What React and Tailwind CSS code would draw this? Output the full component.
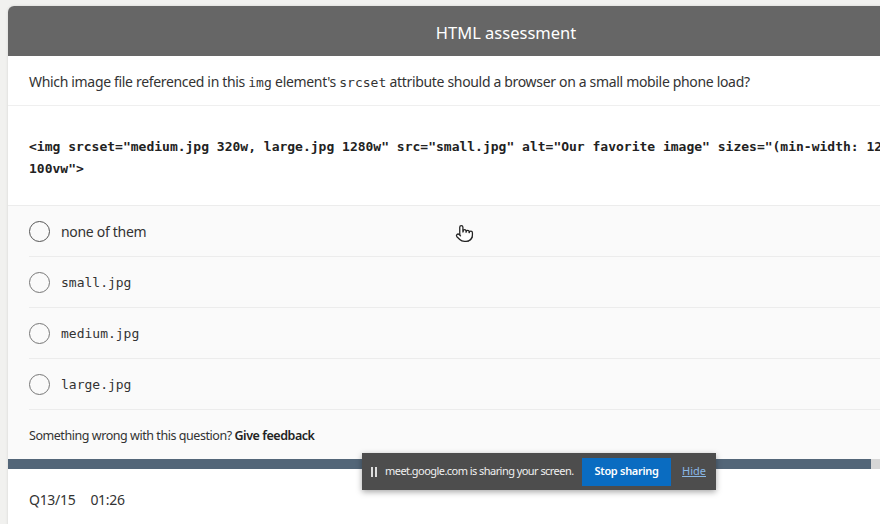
import { Pointer } from 'lucide-react';

const sans = { fontFamily: '"Noto Sans", "Open Sans", sans-serif' };
const mono = { fontFamily: '"DejaVu Sans Mono", "Liberation Mono", monospace' };

const options = [
  { label: 'none of them', code: false, hovered: true },
  { label: 'small.jpg', code: true },
  { label: 'medium.jpg', code: true },
  { label: 'large.jpg', code: true },
];

const Option = ({ label, code, hovered }) => (
  <div className="flex items-center gap-[11px] h-[51px] border-b border-[#ececec]">
    <span
      className={`w-[21px] h-[21px] rounded-full border-[1.5px] ${hovered ? 'border-[#555]' : 'border-[#777]'}`}
    />
    <span
      className={code ? 'text-[13px] text-[#333] pt-[2px]' : 'text-[14px] text-[#333] tracking-[-0.3px]'}
      style={code ? mono : sans}
    >
      {label}
    </span>
  </div>
);

const App = () => {
  return (
    <div className="relative w-[880px] h-[524px] overflow-hidden bg-[#f1f1ef]" style={sans}>
      <div className="ml-[8px] mt-[6px] w-[996px] bg-white rounded-t-[6px] overflow-hidden shadow-[0_0_3px_rgba(0,0,0,0.12)]">
        <header className="h-[50px] bg-[#666666] flex items-center justify-center pt-[5px]">
          <h1 className="text-[16.5px] text-white">HTML assessment</h1>
        </header>

        <div className="px-[21px] h-[50px] flex items-center border-b border-[#efefef] pt-[2px]">
          <p className="text-[14px] text-[#333] tracking-[-0.33px]">
            Which image file referenced in this{' '}
            <code className="text-[13px] tracking-normal" style={mono}>img</code> element's{' '}
            <code className="text-[13px] tracking-normal" style={mono}>srcset</code> attribute should a browser on a small mobile phone load?
          </p>
        </div>

        <div className="px-[21px] h-[100px] flex items-center border-b border-[#ececec]">
          <pre className="text-[13px] leading-[22px] font-bold text-[#222] pt-[4px]" style={mono}>
            {'<img srcset="medium.jpg 320w, large.jpg 1280w" src="small.jpg" alt="Our favorite image" sizes="(min-width: 1200px) 50vw,\n100vw">'}
          </pre>
        </div>

        <div className="bg-[#fafafa]">
          <div className="pl-[21px]">
            {options.map((o) => (
              <Option key={o.label} {...o} />
            ))}
          </div>
          <div className="px-[21px] h-[49px] flex items-center pt-[3px]">
            <p className="text-[12.5px] text-[#333] tracking-[-0.45px]">
              Something wrong with this question? <span className="font-semibold text-[#222]">Give feedback</span>
            </p>
          </div>
        </div>

        <div className="h-[10px] bg-[#d6d6d6]">
          <div className="h-full bg-[#536678]" style={{ width: `${(13 / 15) * 100}%` }} />
        </div>

        <div className="px-[21px] h-[60px] flex items-center gap-[15px] text-[14px] text-[#333] tracking-[-0.3px]">
          <span>Q13/15</span>
          <span>01:26</span>
        </div>
      </div>

      {/* screen sharing notice */}
      <div className="absolute left-[362px] top-[453px] w-[354px] h-[37px] bg-[#4d4d4d] shadow-[0_2px_6px_rgba(0,0,0,0.35)] flex items-center pl-[9px] pr-[10px]">
        <span className="flex gap-[2px] mr-[8px]">
          <span className="w-[2px] h-[10px] bg-[#ddd]" />
          <span className="w-[2px] h-[10px] bg-[#ddd]" />
        </span>
        <span className="text-[11px] text-[#f0f0f0] tracking-[-0.55px] whitespace-nowrap">meet.google.com is sharing your screen.</span>
        <button className="ml-auto h-[28px] w-[89px] bg-[#0a6cc1] text-white text-[11px] font-semibold tracking-[-0.3px] whitespace-nowrap">
          Stop sharing
        </button>
        <span className="ml-[11px] text-[11px] text-[#8ab8e6] underline">Hide</span>
      </div>

      {/* cursor */}
      <div className="absolute left-[455px] top-[224px]">
        <Pointer size={19} strokeWidth={1.6} className="text-[#222] fill-white" />
      </div>
    </div>
  );
};

export default App;
